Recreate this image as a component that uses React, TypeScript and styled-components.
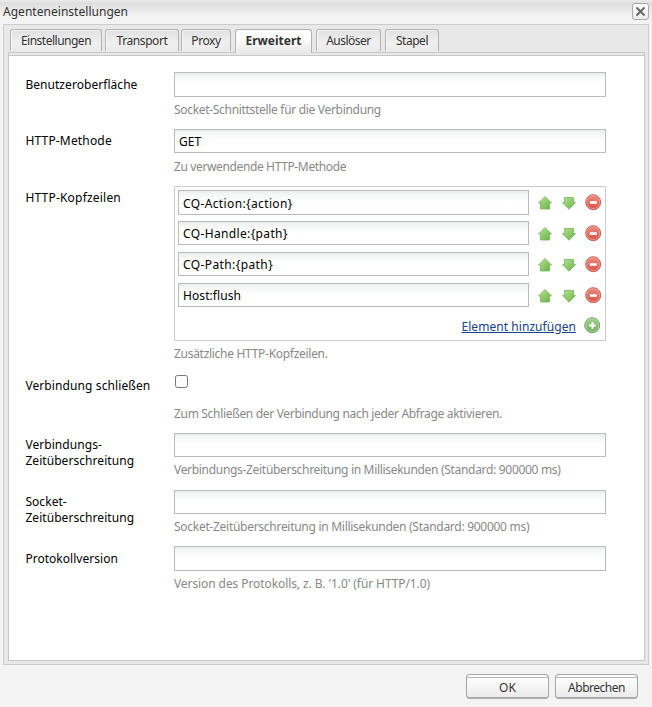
import React from "react";
import styled, { createGlobalStyle } from "styled-components";

const Global = createGlobalStyle`
  * { box-sizing: border-box; }
  body { margin: 0; background: #f3f3f3; font: 12px/16px "Noto Sans", sans-serif; color: #000; overflow: hidden; }
`;

const Dialog = styled.div`
  width: 652px;
  height: 707px;
  display: flex;
  flex-direction: column;
  background: linear-gradient(#e9e9e9 0, #e9e9e9 1px, #dedede 3px, #f3f3f3 17px);
`;

const TitleBar = styled.header`
  height: 24px;
  flex: none;
  display: flex;
  justify-content: space-between;
  align-items: flex-start;
  padding: 3px 3px 0;
  color: #333;
`;

const Title = styled.span<{ $ls: number }>`
  padding-top: 1px;
  letter-spacing: ${(p) => p.$ls}px;
`;

const CloseButton = styled.button`
  width: 17px;
  height: 17px;
  padding: 0;
  border: 1px solid #aaa;
  border-radius: 3px;
  background: linear-gradient(#fff, #ececec);
  display: flex;
  align-items: center;
  justify-content: center;
`;

const Frame = styled.main`
  margin: 0 3px 0 3px;
  height: 641px;
  flex: none;
  border: 1px solid #ccc;
  background: #e8e8e8;
  padding: 4px 3px 3px 4px;
  display: flex;
  flex-direction: column;
`;

const Tabs = styled.nav`
  display: flex;
  align-items: flex-start;
  height: 23px;
  padding-left: 2px;
  position: relative;
`;

const Tab = styled.button<{ $w: number; $gap: number; $ls: number; $active?: boolean }>`
  width: ${(p) => p.$w}px;
  height: ${(p) => (p.$active ? 24 : 22)}px;
  margin: 0 ${(p) => p.$gap}px 0 0;
  padding: ${(p) => (p.$active ? "0 0 1px" : "1px 0 0")};
  flex: none;
  border: 1px solid #b2b2b2;
  border-bottom: 0;
  border-radius: 3px 3px 0 0;
  background: ${(p) => (p.$active ? "linear-gradient(#fff 30%, #e8e8e8)" : "linear-gradient(#e0e0e0, #f0f0f0 60%, #eaeaea)")};
  box-shadow: inset 1px 1px 0 #f7f7f7;
  font: ${(p) => (p.$active ? 700 : 400)} 12px/16px "Noto Sans", sans-serif;
  letter-spacing: ${(p) => p.$ls}px;
  color: #333;
  white-space: nowrap;
  display: flex;
  justify-content: center;
  align-items: center;
`;

const Panel = styled.section`
  flex: 1;
  border: 1px solid #c8c8c8;
  border-top: 0;
  background: #fff;
`;

const TabStrip = styled.div`
  height: 4px;
  border: 1px solid #c8c8c8;
  background: #e8e8e8;
`;

const Field = styled.div<{ $h: number }>`
  display: grid;
  grid-template-columns: 149px 432px;
  height: ${(p) => p.$h}px;
  padding-left: 16px;
`;

const Form = styled.form`
  padding-top: 16px;
`;

const Label = styled.label<{ $top?: number; $ls: number }>`
  padding: ${(p) => p.$top ?? 4}px 0 0 0.4px;
  letter-spacing: ${(p) => p.$ls}px;
  white-space: pre-line;
`;

const Input = styled.input<{ $h: number }>`
  display: block;
  width: 100%;
  min-width: 0;
  height: ${(p) => p.$h}px;
  margin: 0;
  padding: 1px 4px 0;
  border: 1px solid #b9bcbe;
  border-radius: 0;
  outline: 0;
  background: linear-gradient(#eaecec, #f4f6f6 3px, #fff 11px);
  font: 12px/16px "Noto Sans", sans-serif;
  letter-spacing: inherit;
  color: #000;
`;

const Hint = styled.div<{ $top: number; $ls: number }>`
  padding-top: ${(p) => p.$top}px;
  letter-spacing: ${(p) => p.$ls}px;
  color: #888;
  white-space: nowrap;
`;

const List = styled.div`
  height: 155px;
  border: 1px solid #ccc;
  padding: 3px;
`;

const ListRow = styled.div<{ $ls: number }>`
  height: 31px;
  display: grid;
  grid-template-columns: 351px 16px 16px 17px;
  column-gap: 8px;
  letter-spacing: ${(p) => p.$ls}px;
  & > svg { margin-top: 4px; }
`;

const AddRow = styled.div`
  display: flex;
  justify-content: flex-end;
  padding: 3px 1px 0 0;
  gap: 8px;
`;

const AddLink = styled.a<{ $ls: number }>`
  color: #15428b;
  text-decoration: underline;
  letter-spacing: ${(p) => p.$ls}px;
  padding-top: 2px;
`;

const Checkbox = styled.input`
  display: block;
  width: 13px;
  height: 13px;
  margin: 2px 0 0 1px;
`;

const Footer = styled.footer`
  display: flex;
  justify-content: flex-end;
  gap: 6px;
  padding: 9px 14px 0 0;
`;

const Button = styled.button<{ $ls: number }>`
  width: 83px;
  height: 25px;
  padding: 3px 0 0;
  border: 1px solid #a5a5a5;
  border-bottom: 2px solid #aaa;
  border-radius: 4px;
  background: linear-gradient(#fff 0 2px, #b8b8b8 2px 3px, #fff 3px, #eaeaea);
  font: 12px/16px "Noto Sans", sans-serif;
  letter-spacing: ${(p) => p.$ls}px;
  color: #333;
`;

const Arrow = ({ down = false }: { down?: boolean }) => (
  <svg width="16" height="17" viewBox="0 0 16 17">
    <defs>
      <linearGradient id={down ? "gd" : "gu"} x1="0" x2="1" y1="0" y2="1">
        <stop offset="0" stopColor="#b8e598" />
        <stop offset="1" stopColor="#66ae42" />
      </linearGradient>
    </defs>
    <path
      d={down ? "M3.5 3.5h9v5h2L8 15.3 1.5 8.5h2z" : "M8 2.5 14.5 9h-2v6h-9V9h-2z"}
      fill={down ? "url(#gd)" : "url(#gu)"}
      stroke="#75b856"
      strokeOpacity="0.8"
    />
  </svg>
);

const Round = ({ plus = false }: { plus?: boolean }) => (
  <svg width="17" height="17" viewBox="0 0 17 17">
    <defs>
      <linearGradient id={plus ? "rp" : "rm"} x1="0" x2="0" y1="0" y2="1">
        <stop offset="0" stopColor={plus ? "#a5d292" : "#eb8d82"} />
        <stop offset="1" stopColor={plus ? "#69ab52" : "#d84f45"} />
      </linearGradient>
    </defs>
    <circle cx="8.2" cy="8.2" r="7.5" fill={plus ? "url(#rp)" : "url(#rm)"} stroke={plus ? "#76a568" : "#c9635b"} />
    <circle cx="8.2" cy="8.2" r="6.4" fill="none" stroke={plus ? "#b9d9ad" : "#efa59c"} strokeWidth="0.8" />
    <path d={plus ? "M5 8.5h7M8.5 5v7" : "M4.8 8.5h7"} stroke="#fff" strokeWidth={plus ? 2 : 2.6} />
  </svg>
);

const headers: { value: string; h: number; ls: number }[] = [
  { value: "CQ-Action:{action}", h: 25, ls: 0.37 },
  { value: "CQ-Handle:{path}", h: 24, ls: 0.36 },
  { value: "CQ-Path:{path}", h: 24, ls: 0.4 },
  { value: "Host:flush", h: 24, ls: 0.08 },
];

export default function App() {
  return (
    <>
      <Global />
      <Dialog>
        <TitleBar>
          <Title $ls={0.03}>Agenteneinstellungen</Title>
          <CloseButton type="button">
            <svg width="11" height="11" viewBox="0 0 11 11">
              <path d="M1.5 1.5l8 8M9.5 1.5l-8 8" stroke="#666" strokeWidth="2" />
            </svg>
          </CloseButton>
        </TitleBar>
        <Frame>
          <Tabs>
            <Tab $w={92} $gap={3} $ls={-0.5}>Einstellungen</Tab>
            <Tab $w={74} $gap={2} $ls={-0.42}>Transport</Tab>
            <Tab $w={50} $gap={4} $ls={-0.4}>Proxy</Tab>
            <Tab $w={77} $gap={4} $ls={0} $active>Erweitert</Tab>
            <Tab $w={65} $gap={4} $ls={-0.5}>Auslöser</Tab>
            <Tab $w={54} $gap={0} $ls={-0.45}>Stapel</Tab>
          </Tabs>
          <TabStrip />
          <Panel>
            <Form>
              <Field $h={57}>
                <Label $top={5} $ls={0.05}>Benutzeroberfläche</Label>
                <div><Input $h={25} /><Hint $top={5} $ls={-0.31}>Socket-Schnittstelle für die Verbindung</Hint></div>
              </Field>
              <Field $h={57}>
                <Label $ls={0.17}>HTTP-Methode</Label>
                <div><Input $h={24} defaultValue="GET" /><Hint $top={6} $ls={-0.37}>Zu verwendende HTTP-Methode</Hint></div>
              </Field>
              <Field $h={187}>
                <Label $ls={0.2}>HTTP-Kopfzeilen</Label>
                <div>
                  <List>
                    {headers.map((r) => (
                      <ListRow key={r.value} $ls={r.ls}>
                        <Input $h={r.h} defaultValue={r.value} />
                        <Arrow /><Arrow down /><Round />
                      </ListRow>
                    ))}
                    <AddRow><AddLink $ls={0.06}>Element hinzufügen</AddLink><Round plus /></AddRow>
                  </List>
                  <Hint $top={5} $ls={-0.29}>Zusätzliche HTTP-Kopfzeilen.</Hint>
                </div>
              </Field>
              <Field $h={60}>
                <Label $top={5} $ls={0.1}>Verbindung schließen</Label>
                <div><Checkbox type="checkbox" /><Hint $top={18} $ls={-0.32}>Zum Schließen der Verbindung nach jeder Abfrage aktivieren.</Hint></div>
              </Field>
              <Field $h={57}>
                <Label $ls={0.06}>{"Verbindungs-\nZeitüberschreitung"}</Label>
                <div><Input $h={24} /><Hint $top={5} $ls={-0.31}>Verbindungs-Zeitüberschreitung in Millisekunden (Standard: 900000 ms)</Hint></div>
              </Field>
              <Field $h={56}>
                <Label $ls={0.06}>{"Socket-\nZeitüberschreitung"}</Label>
                <div><Input $h={24} /><Hint $top={5} $ls={-0.28}>Socket-Zeitüberschreitung in Millisekunden (Standard: 900000 ms)</Hint></div>
              </Field>
              <Field $h={57}>
                <Label $top={5} $ls={0.03}>Protokollversion</Label>
                <div><Input $h={25} /><Hint $top={5} $ls={-0.09}>Version des Protokolls, z. B. '1.0' (für HTTP/1.0)</Hint></div>
              </Field>
            </Form>
          </Panel>
        </Frame>
        <Footer>
          <Button type="button" $ls={0}>OK</Button>
          <Button type="button" $ls={-0.5}>Abbrechen</Button>
        </Footer>
      </Dialog>
    </>
  );
}
